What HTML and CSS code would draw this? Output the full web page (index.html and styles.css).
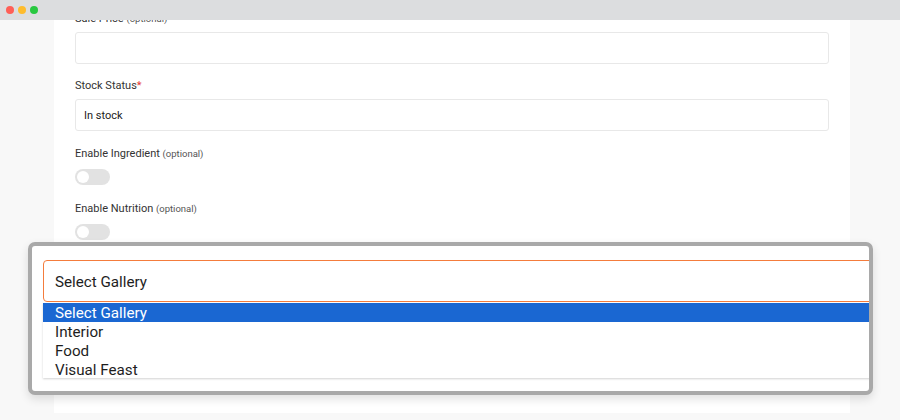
FILE: index.html
```html
<!DOCTYPE html>
<html lang="en">
<head>
<meta charset="utf-8">
<title>Product form</title>
<link rel="stylesheet" href="styles.css">
</head>
<body>
<div class="window">
  <div class="titlebar">
    <span class="dot dot-red"></span>
    <span class="dot dot-yellow"></span>
    <span class="dot dot-green"></span>
  </div>
  <div class="viewport">
    <div class="card">
      <div class="card-inner">
        <div class="field">
          <label class="label">Sale Price <span class="opt">(optional)</span></label>
          <div class="input"></div>
        </div>
        <div class="field">
          <label class="label">Stock Status<span class="req">*</span></label>
          <div class="input">In stock</div>
        </div>
        <div class="field field-toggle">
          <label class="label">Enable Ingredient <span class="opt">(optional)</span></label>
          <div class="toggle"><span class="knob"></span></div>
        </div>
        <div class="field field-toggle">
          <label class="label">Enable Nutrition <span class="opt">(optional)</span></label>
          <div class="toggle"><span class="knob"></span></div>
        </div>
      </div>
    </div>
    <div class="zoom-box">
      <div class="big-select">Select Gallery</div>
      <ul class="listbox">
        <li class="option selected">Select Gallery</li>
        <li class="option">Interior</li>
        <li class="option">Food</li>
        <li class="option">Visual Feast</li>
      </ul>
    </div>
  </div>
</div>
</body>
</html>
```
FILE: styles.css
```css
* { box-sizing: border-box; }
html, body {
  margin: 0;
  padding: 0;
  background: #f8f8f8;
  font-family: Roboto, "Liberation Sans", Arial, sans-serif;
}
.window {
  width: 900px;
  height: 420px;
  display: flex;
  flex-direction: column;
  position: relative;
  overflow: hidden;
}
.titlebar {
  height: 20px;
  flex: none;
  background: #dcdddf;
  display: flex;
  align-items: center;
  gap: 4px;
  padding-left: 6px;
  position: relative;
  z-index: 2;
}
.dot {
  width: 8px;
  height: 8px;
  border-radius: 50%;
}
.dot-red { background: #ff5f57; }
.dot-yellow { background: #febc2e; }
.dot-green { background: #28c840; }
.viewport {
  flex: 1;
  overflow: hidden;
  padding: 0 50px 7px 54px;
  display: flex;
}
.card {
  flex: 1;
  background: #fff;
  padding: 0 21px;
}
.card-inner {
  margin-top: -9px;
}
.field { margin-bottom: 14px; }
.field-toggle {
  padding-top: 1px;
  margin-bottom: 15px;
}
.label {
  display: block;
  font-size: 11px;
  line-height: 16px;
  color: #333;
  margin-bottom: 5px;
}
.opt {
  font-size: 9.5px;
  line-height: 1;
  color: #555;
}
.req { color: #e53935; }
.input {
  height: 32px;
  border: 1px solid #e8e8e8;
  border-radius: 3px;
  font-size: 11px;
  line-height: 31px;
  padding-left: 8px;
  color: #222;
}
.toggle {
  width: 35px;
  height: 16px;
  border-radius: 8px;
  background: #e2e2e2;
  margin-top: 7px;
  position: relative;
}
.knob {
  position: absolute;
  left: 2px;
  top: 2px;
  width: 12px;
  height: 12px;
  border-radius: 50%;
  background: #fff;
}
.zoom-box {
  position: absolute;
  left: 28px;
  top: 242px;
  width: 845px;
  height: 153px;
  border: 4px solid #a9a9a9;
  border-radius: 7px;
  background: #fff;
  box-shadow: 0 4px 10px rgba(0, 0, 0, 0.12);
  overflow: hidden;
  padding: 14px 0 0 11px;
  z-index: 3;
}
.big-select {
  width: 900px;
  height: 42px;
  border: 1px solid #f47c3c;
  border-radius: 4px;
  font-size: 15.2px;
  line-height: 42px;
  padding-left: 11px;
  color: #1e1e1e;
}
.listbox {
  list-style: none;
  margin: 1px 0 0;
  padding: 0;
  width: 900px;
  height: 75px;
  overflow: hidden;
  background: #fff;
  box-shadow: 0 1px 2px rgba(0, 0, 0, 0.18);
}
.option {
  height: 19px;
  font-size: 15.2px;
  line-height: 20px;
  padding-left: 12px;
  color: #1e1e1e;
  overflow: hidden;
}
.option.selected {
  background: #1a67d2;
  color: #fff;
}
```
